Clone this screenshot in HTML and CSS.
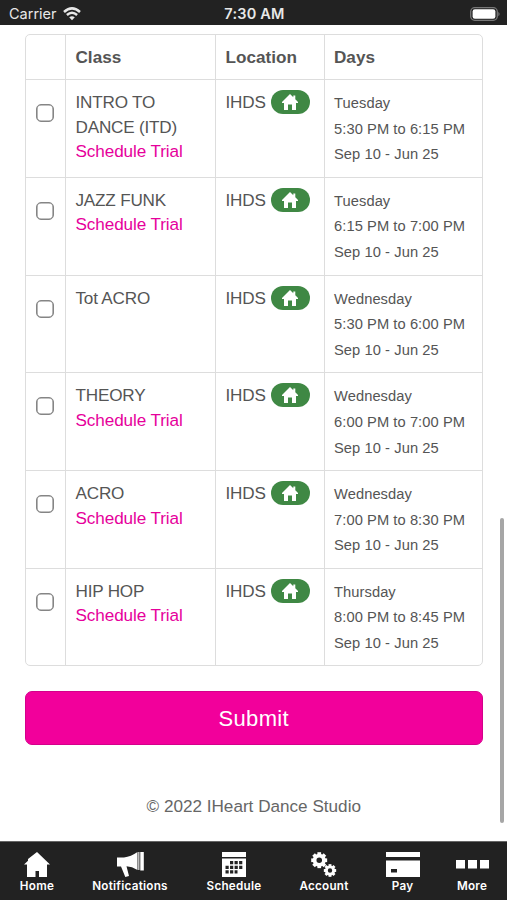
FILE: index.html
```
<!DOCTYPE html>
<html lang="en">
<head>
<meta charset="utf-8">
<meta name="viewport" content="width=device-width">
<title>IHeart Dance Studio</title>
<link rel="stylesheet" href="styles.css">
</head>
<body>
<svg width="0" height="0" class="defs" aria-hidden="true">
  <symbol id="home-tab" viewBox="0 0 26 25"><path d="M13 0 26 12.500H23V25H15V19H11.500V25H3V12.500H0L4 8.700V7Z"/></symbol>
  <symbol id="house" viewBox="0 0 16 16"><path d="M8 0 11.300 3.300V1.500H13.300V5.200L16 8V9H14V16H10V10.500H6V16H2V9H0V8Z"/></symbol>
  <symbol id="gear" viewBox="-8 -8 16 16">
    <g id="teeth"><rect x="-1.800" y="-7.800" width="3.600" height="4"/><rect x="-1.800" y="3.800" width="3.600" height="4"/><rect x="-7.800" y="-1.800" width="4" height="3.600"/><rect x="3.800" y="-1.800" width="4" height="3.600"/></g>
    <use href="#teeth" transform="rotate(45)"/>
    <circle r="4.500" fill="none" stroke="currentColor" stroke-width="3.600"/>
  </symbol>
</svg>
<header class="status">
  <span class="carrier">Carrier
    <svg class="wifi" viewBox="0 0 18 14" fill="none" stroke="currentColor" stroke-width="2.500"><path d="M1 5Q9-2.200 17 5M3.900 8Q9 3.500 14.100 8"/><path d="M6.200 10.300Q9 8 11.800 10.300L9 13.300Z" fill="currentColor" stroke="none"/></svg>
  </span>
  <span class="clock">7:30 AM</span>
  <svg class="battery" viewBox="0 0 30 14"><rect x=".7" y=".7" width="26.600" height="12.600" rx="4" fill="#222" stroke="#777" stroke-width="1.300"/><rect x="2.600" y="2.300" width="22.800" height="9.400" rx="2.300" fill="#fff"/><path d="M28.300 4.700Q31 7 28.300 9.300Z" fill="#777"/></svg>
</header>
<main class="content">
  <section class="table">
    <div class="row head"><div></div><div>Class</div><div>Location</div><div>Days</div></div>
    <div class="row"><div><i class="check"></i></div><div><p class="caps">INTRO TO<br>DANCE (ITD)</p><a>Schedule Trial</a></div><div class="loc">IHDS <b class="badge"><svg><use href="#house"/></svg></b></div><div class="days">Tuesday<br>5:30 PM to 6:15 PM<br>Sep 10 - Jun 25</div></div>
    <div class="row"><div><i class="check"></i></div><div><p class="caps">JAZZ FUNK</p><a>Schedule Trial</a></div><div class="loc">IHDS <b class="badge"><svg><use href="#house"/></svg></b></div><div class="days">Tuesday<br>6:15 PM to 7:00 PM<br>Sep 10 - Jun 25</div></div>
    <div class="row"><div><i class="check"></i></div><div><p class="caps">Tot ACRO</p></div><div class="loc">IHDS <b class="badge"><svg><use href="#house"/></svg></b></div><div class="days">Wednesday<br>5:30 PM to 6:00 PM<br>Sep 10 - Jun 25</div></div>
    <div class="row"><div><i class="check"></i></div><div><p class="caps">THEORY</p><a>Schedule Trial</a></div><div class="loc">IHDS <b class="badge"><svg><use href="#house"/></svg></b></div><div class="days">Wednesday<br>6:00 PM to 7:00 PM<br>Sep 10 - Jun 25</div></div>
    <div class="row"><div><i class="check"></i></div><div><p class="caps">ACRO</p><a>Schedule Trial</a></div><div class="loc">IHDS <b class="badge"><svg><use href="#house"/></svg></b></div><div class="days">Wednesday<br>7:00 PM to 8:30 PM<br>Sep 10 - Jun 25</div></div>
    <div class="row"><div><i class="check"></i></div><div><p class="caps">HIP HOP</p><a>Schedule Trial</a></div><div class="loc">IHDS <b class="badge"><svg><use href="#house"/></svg></b></div><div class="days">Thursday<br>8:00 PM to 8:45 PM<br>Sep 10 - Jun 25</div></div>
  </section>
  <button class="submit">Submit</button>
  <footer class="copyright">© 2022 IHeart Dance Studio</footer>
  <div class="scrollbar"></div>
</main>
<nav class="tabs">
  <div class="tab"><svg width="26" height="25"><use href="#home-tab"/></svg><span>Home</span></div>
  <div class="tab"><svg width="27" height="25" viewBox="0 0 27 25"><path d="M0 5.500H7Q14 4.500 20.500 0V18Q15 14.500 9.500 14.300L12 24 8.300 25 4 14.500H0ZM21.300 0H22.400V18H21.300ZM23.300 0H26.800V18.500H23.300Z"/></svg><span>Notifications</span></div>
  <div class="tab"><svg width="24" height="25" viewBox="0 0 24 25"><path d="M0 0H24V5H0ZM0 6.500H24V25H0Z"/><path d="M8 10.700H20.500M3.500 15.300H20.500M3.500 19.800H15.500" stroke="#222" stroke-width="3.200" stroke-dasharray="3.200 1.350"/></svg><span>Schedule</span></div>
  <div class="tab"><svg width="26" height="25" viewBox="0 0 26 25"><use href="#gear" x="0" y="0" width="16.500" height="16.500"/><use href="#gear" x="12.500" y="12" width="13" height="13"/></svg><span>Account</span></div>
  <div class="tab"><svg width="34" height="25" viewBox="0 0 34 25"><path d="M0 0H34V5H0ZM0 8.500H34V25.500H0Z"/><path d="M5 17H11V20.500H5Z" fill="#222"/></svg><span>Pay</span></div>
  <div class="tab"><svg width="33" height="25" viewBox="0 0 33 25"><path d="M0 8H9V16.500H0ZM12 8H21V16.500H12ZM24 8H33V16.500H24Z"/></svg><span>More</span></div>
</nav>
</body>
</html>
```
FILE: styles.css
```
* { box-sizing: border-box; }
body {
  margin: 0;
  height: 900px;
  display: flex;
  flex-direction: column;
  overflow: hidden;
  background: #fff;
  color: #555;
  font-family: "Liberation Sans", Arial, sans-serif;
  font-size: 17.14px;
  line-height: 24.5px;
}
p { margin: 0; }
.defs { position: absolute; }
.status {
  height: 25px;
  flex: none;
  display: grid;
  grid-template-columns: 1fr auto 1fr;
  align-items: center;
  padding: 2px 7px 0 9px;
  background: #222;
  color: #e8e8e8;
  font: 14.5px/22px Inter, sans-serif;
}
.carrier { display: flex; gap: 6px; align-items: center; }
.wifi { width: 18px; height: 14px; }
.clock { font-weight: 600; letter-spacing: .2px; }
.battery { width: 30px; height: 14px; justify-self: end; }
.content {
  position: relative;
  flex: 1;
  padding: 9px 24.5px 0 25px;
}
.table {
  border: 1px solid #ddd;
  border-radius: 5px;
  height: 632px;
}
.row {
  display: grid;
  grid-template-columns: 39px 150px 108.5px 1fr;
  height: 97.75px;
  border-top: 1px solid #ddd;
}
.row > div { padding: 10px 0 0 9.5px; border-left: 1px solid #ddd; }
.row > div:first-child { border-left: 0; padding-left: 10px; }
.head { height: 44px; border-top: 0; font-weight: bold; }
.check {
  display: block;
  width: 18px;
  height: 18px;
  margin-top: 14px;
  border: 1px solid #858585;
  box-shadow: inset 0 0 0 .6px #858585;
  border-radius: 5px;
}
.caps { letter-spacing: -.2px; }
a { display: block; color: #e6009b; letter-spacing: -.1px; }
.loc { display: flex; align-items: flex-start; gap: 5px; letter-spacing: -.15px; }
.badge {
  display: grid;
  place-items: center;
  width: 39px;
  height: 24px;
  border-radius: 12px;
  background: #3f8844;
}
.badge svg { width: 16px; height: 16px; fill: #fff; }
.row > .days { padding-top: 11px; font-size: 14.7px; line-height: 25.7px; letter-spacing: .07px; white-space: nowrap; }
.submit {
  display: block;
  width: 100%;
  height: 54px;
  margin-top: 25px;
  padding: 2px 0 0;
  border: 1px solid #d4008b;
  border-radius: 7px;
  background: #f2009b;
  color: #fff;
  font: 22px/28px "Liberation Sans", Arial, sans-serif;
  letter-spacing: .3px;
}
.copyright { margin-top: 49px; text-align: center; color: #666; }
.scrollbar {
  position: absolute;
  top: 493px;
  right: 3px;
  width: 4px;
  height: 305px;
  border-radius: 2px;
  background: #a6a6a6;
}
.tabs {
  flex: none;
  height: 59px;
  display: grid;
  grid-template-columns: 74px 112px 96px 84px 73px 66px;
  padding-top: 10px;
  border-top: 1px solid #666;
  background: #222;
  color: #fff;
}
.tab { display: flex; flex-direction: column; align-items: center; font: 600 11.7px/18px Inter, sans-serif; letter-spacing: .25px; }
.tab svg { fill: currentColor; }
```
